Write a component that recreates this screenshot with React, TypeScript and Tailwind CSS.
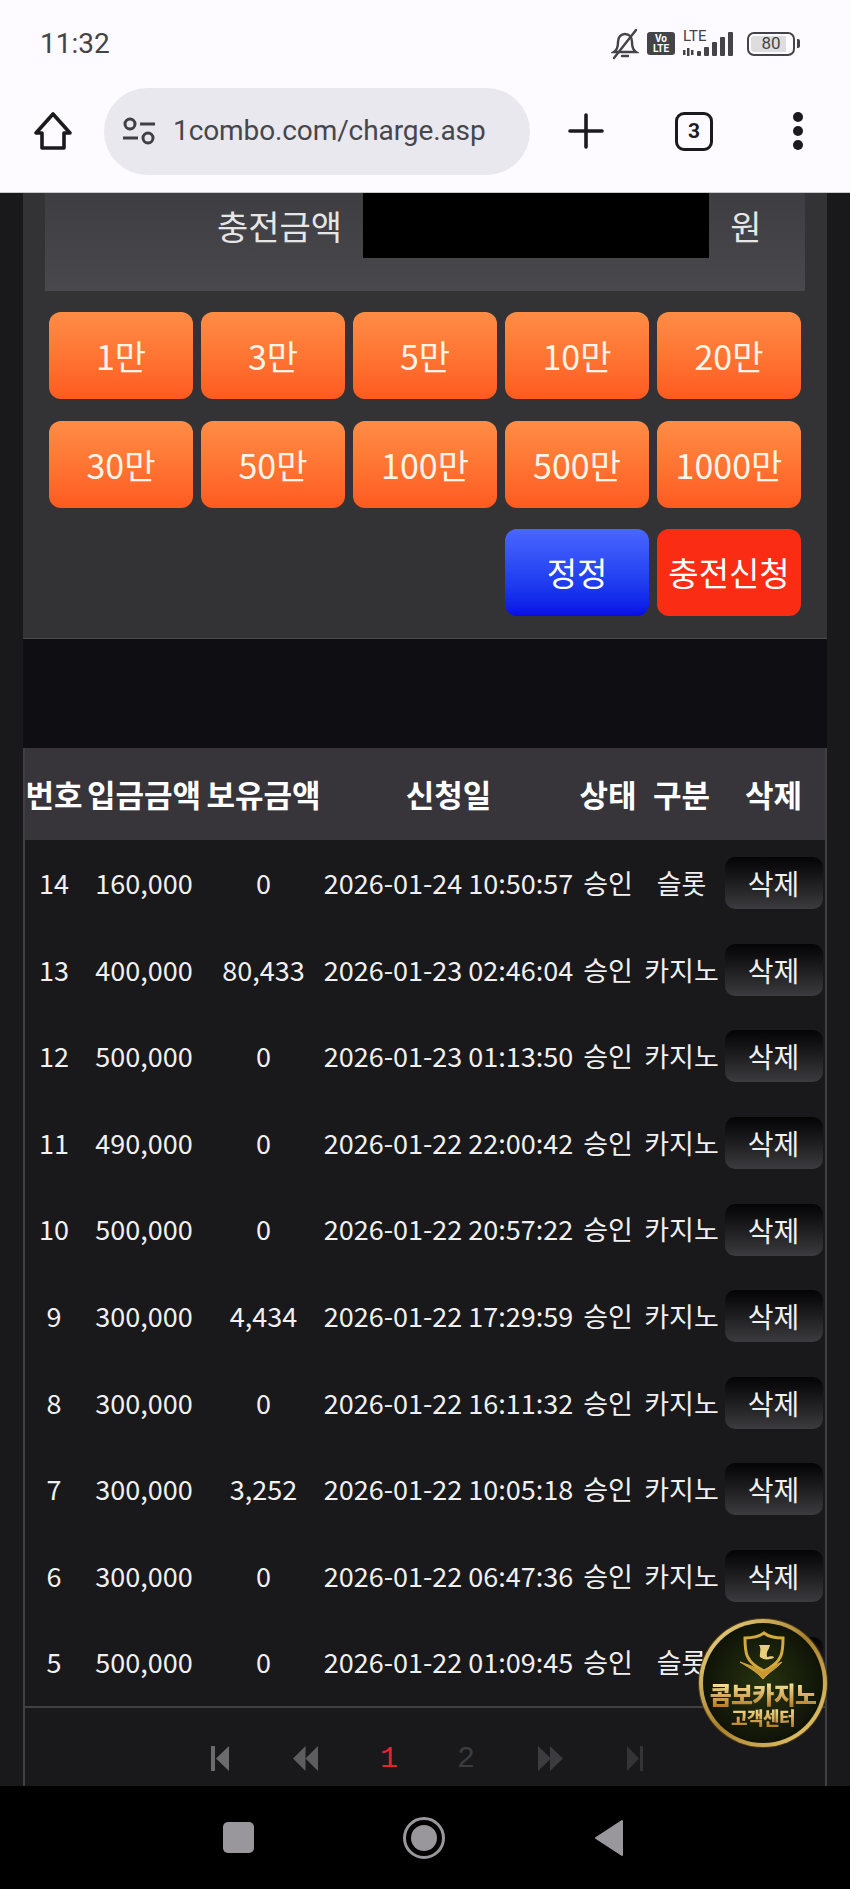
const amounts = ["1만", "3만", "5만", "10만", "20만", "30만", "50만", "100만", "500만", "1000만"];

type Row = { no: number; amount: string; balance: string; date: string; kind: string };

const rows: Row[] = [
  { no: 14, amount: "160,000", balance: "0", date: "2026-01-24 10:50:57", kind: "슬롯" },
  { no: 13, amount: "400,000", balance: "80,433", date: "2026-01-23 02:46:04", kind: "카지노" },
  { no: 12, amount: "500,000", balance: "0", date: "2026-01-23 01:13:50", kind: "카지노" },
  { no: 11, amount: "490,000", balance: "0", date: "2026-01-22 22:00:42", kind: "카지노" },
  { no: 10, amount: "500,000", balance: "0", date: "2026-01-22 20:57:22", kind: "카지노" },
  { no: 9, amount: "300,000", balance: "4,434", date: "2026-01-22 17:29:59", kind: "카지노" },
  { no: 8, amount: "300,000", balance: "0", date: "2026-01-22 16:11:32", kind: "카지노" },
  { no: 7, amount: "300,000", balance: "3,252", date: "2026-01-22 10:05:18", kind: "카지노" },
  { no: 6, amount: "300,000", balance: "0", date: "2026-01-22 06:47:36", kind: "카지노" },
  { no: 5, amount: "500,000", balance: "0", date: "2026-01-22 01:09:45", kind: "슬롯" },
];

const krFont = "font-['Noto_Sans_CJK_KR','Noto_Sans',sans-serif]";

function StatusBar() {
  return (
    <div className="flex h-[70px] items-center justify-between pl-[40px] pr-[50px] pt-[17px] text-[#444347]">
      <span className="font-['Roboto',sans-serif] text-[28px] leading-none">11:32</span>
      <div className="flex items-center">
        <svg width="28" height="32" viewBox="0 0 28 32" fill="none" stroke="#444347" strokeWidth="2.4" strokeLinecap="round">
          <path d="M3 24c3-2 4-5 4-10 0-5 3-8 7-8s7 3 7 8c0 5 1 8 4 10z" />
          <path d="M11 28h6" />
          <path d="M25 2 3 30" />
        </svg>
        <div className="ml-[8px] flex h-[23px] w-[28px] flex-col items-center justify-center rounded-[3px] bg-[#444347] font-['Roboto',sans-serif] text-[10px] font-bold leading-[10px] text-white">
          <span>Vo</span>
          <span>LTE</span>
        </div>
        <div className="relative ml-[8px] h-[26px] w-[52px]">
          <span className="absolute left-0 top-[-2px] font-['Roboto',sans-serif] text-[15px] leading-[14px]">LTE</span>
          <svg width="52" height="26" viewBox="0 0 52 26" fill="#444347">
            <rect x="0" y="19" width="2.5" height="5" />
            <rect x="4" y="17" width="2.5" height="8" />
            <rect x="8" y="19" width="2.5" height="5" />
            <rect x="14" y="20" width="4" height="5" rx="1" />
            <rect x="21" y="16" width="5" height="9" rx="1" />
            <rect x="29" y="11" width="5" height="14" rx="1" />
            <rect x="37" y="6" width="5" height="19" rx="1" />
            <rect x="45" y="1" width="5" height="24" rx="1" />
          </svg>
        </div>
        <div className="ml-[12px] flex h-[24px] w-[48px] items-center justify-center rounded-[7px] border-2 border-[#444347] bg-[linear-gradient(90deg,#dddcdf_84%,transparent_84%)] bg-clip-content p-[2px] font-['Roboto',sans-serif] text-[17px] leading-none">
          80
        </div>
        <div className="ml-[2px] h-[9px] w-[3px] rounded-r-[2px] bg-[#444347]" />
      </div>
    </div>
  );
}

function Toolbar() {
  return (
    <div className="flex h-[123px] items-center border-b border-[#c9c8cc] pl-[33px]">
      <svg width="40" height="40" viewBox="0 0 40 40" fill="none" stroke="#1b1b1f" strokeWidth="3.6" strokeLinejoin="round">
        <path d="M20 3 3 22h6v15h22V22h6z" />
      </svg>
      <div className="ml-[31px] flex h-[87px] w-[426px] items-center rounded-full bg-[#e9e8ee] pl-[19px]">
        <svg width="32" height="28" viewBox="0 0 32 28" fill="none" stroke="#3f3f45" strokeWidth="3">
          <circle cx="7" cy="7" r="5" />
          <path d="M17 7h15" />
          <path d="M0 21h15" />
          <circle cx="25" cy="21" r="5" />
        </svg>
        <span className="ml-[18px] font-['Roboto',sans-serif] text-[28px] leading-none tracking-[-0.1px] text-[#46464c]">
          1combo.com/charge.asp
        </span>
      </div>
      <svg width="36" height="36" viewBox="0 0 36 36" className="ml-[38px]" stroke="#1b1b1f" strokeWidth="3.6" strokeLinecap="round">
        <path d="M18 2v32" />
        <path d="M2 18h32" />
      </svg>
      <div className="ml-[71px] flex h-[39px] w-[38px] items-center justify-center rounded-[9px] border-[3.5px] border-[#1b1b1f] font-['Roboto',sans-serif] text-[21px] font-bold leading-none text-[#1b1b1f]">
        3
      </div>
      <div className="ml-[80px] flex flex-col gap-[4px]">
        <span className="size-[10px] rounded-full bg-[#1b1b1f]" />
        <span className="size-[10px] rounded-full bg-[#1b1b1f]" />
        <span className="size-[10px] rounded-full bg-[#1b1b1f]" />
      </div>
    </div>
  );
}

function ChargePanel() {
  return (
    <div className="border-b border-[#4a4a4d] bg-[#333335] pb-[22px]">
      <div className="mx-[22px] flex h-[98px] items-start bg-gradient-to-b from-[#3e3d41] to-[#49484c] text-[#e6e6e6]">
        <span className="ml-[172px] mt-[9px] text-[34px] leading-[48px]">충전금액</span>
        <div className="ml-[21px] h-[65px] w-[346px] bg-black" />
        <span className="ml-[21px] mt-[9px] text-[34px] leading-[48px]">원</span>
      </div>
      <div className="mt-[21px] grid grid-cols-5 gap-x-[8px] gap-y-[21.5px] pl-[26px] pr-[26px]">
        {amounts.map((a) => (
          <button
            key={a}
            className="flex h-[87px] items-center justify-center rounded-[12px] bg-gradient-to-b from-[#ff8c45] to-[#ff5a1f] text-[34px] text-[#fff4e8]"
          >
            {a}
          </button>
        ))}
        <button className="col-start-4 flex h-[87px] items-center justify-center rounded-[12px] bg-gradient-to-b from-[#4a66ff] to-[#0a0ae6] text-[33px] text-white">
          정정
        </button>
        <button className="flex h-[87px] items-center justify-center rounded-[12px] bg-[#fb2c14] text-[33px] text-white">
          충전신청
        </button>
      </div>
    </div>
  );
}

function HistoryTable() {
  return (
    <div className="border-x-2 border-[#403f43]">
      <table className="w-full table-fixed border-collapse">
        <colgroup>
          <col className="w-[58px]" />
          <col className="w-[122px]" />
          <col className="w-[117px]" />
          <col className="w-[253px]" />
          <col className="w-[66px]" />
          <col className="w-[81px]" />
          <col />
        </colgroup>
        <thead>
          <tr className="h-[92px] bg-[#37353a] text-[31px] font-bold text-white">
            <th className="whitespace-nowrap font-bold">번호</th>
            <th className="whitespace-nowrap font-bold">입금금액</th>
            <th className="whitespace-nowrap font-bold">보유금액</th>
            <th className="whitespace-nowrap font-bold">신청일</th>
            <th className="whitespace-nowrap font-bold">상태</th>
            <th className="whitespace-nowrap font-bold">구분</th>
            <th className="whitespace-nowrap font-bold">삭제</th>
          </tr>
        </thead>
        <tbody className="text-center text-[27px] text-[#f0f0f0]">
          {rows.map((r) => (
            <tr key={r.no} className="h-[86.6px]">
              <td>{r.no}</td>
              <td>{r.amount}</td>
              <td>{r.balance}</td>
              <td className="whitespace-nowrap">{r.date}</td>
              <td>승인</td>
              <td className="whitespace-nowrap">{r.kind}</td>
              <td>
                <button className="h-[52px] w-[98px] rounded-[10px] bg-gradient-to-b from-[#050506] to-[#3c3c40] text-[28px] leading-none text-[#f0f0f0]">
                  삭제
                </button>
              </td>
            </tr>
          ))}
        </tbody>
      </table>
      <Pagination />
    </div>
  );
}

function Pagination() {
  return (
    <div className="flex h-[80px] items-center border-t-2 border-[#403f43] pl-[186px] pt-[24px]">
      <svg width="18" height="25" viewBox="0 0 18 25" fill="#6b6b6e">
        <rect x="0" y="0" width="4" height="25" />
        <path d="M18 0v25L5 12.5z" />
      </svg>
      <svg width="25" height="25" viewBox="0 0 25 25" fill="#5d5d60" className="ml-[64px]">
        <path d="M12.5 0v25L0 12.5z" />
        <path d="M25 0v25L12.5 12.5z" />
      </svg>
      <span className="ml-[62px] w-[18px] text-center font-['Liberation_Mono',monospace] text-[30px] leading-none text-[#e3262c]">1</span>
      <span className="ml-[59px] w-[18px] text-center font-['Liberation_Mono',monospace] text-[30px] leading-none text-[#3c3c40]">2</span>
      <svg width="25" height="25" viewBox="0 0 25 25" fill="#3c3c40" className="ml-[63px]">
        <path d="M0 0v25l13-12.5z" />
        <path d="M12 0v25l13-12.5z" />
      </svg>
      <svg width="17" height="25" viewBox="0 0 17 25" fill="#343437" className="ml-[64px]">
        <path d="M0 0v25l12-12.5z" />
        <rect x="13" y="0" width="3" height="25" />
      </svg>
    </div>
  );
}

function SupportBadge() {
  return (
    <div className="absolute left-[699px] top-[1619px] size-[128px] rounded-full bg-gradient-to-br from-[#f6e08c] via-[#a9812c] to-[#f0d577] p-[4px] shadow-[0_0_0_1px_#4a3a15]">
      <div className="flex size-full flex-col items-center overflow-hidden rounded-full bg-[radial-gradient(circle_at_50%_50%,#26330f,#0d1007_78%)]">
        <svg width="48" height="50" viewBox="0 0 48 50" fill="none" className="mt-[8px] shrink-0" stroke="#d4a93f" strokeWidth="3">
          <path d="M25 2c5 4 11 5 19 5 0 14 0 24-19 33C6 31 6 21 6 7c8 0 14-1 19-5z" />
          <path d="M1 31c8 5 16 9 23 17 7-8 13-10 19-17-6 3-13 6-19 9-8-4-15-6-23-9z" fill="#c9982f" strokeWidth="1" />
          <path d="M20 14h11c-1 5-4 6-3 12 3 0 6-2 7 1-5 2-11 2-14-1-1-4 2-7-1-12z" fill="#e8cf7c" stroke="none" />
        </svg>
        <span className="mt-[-1px] whitespace-nowrap bg-gradient-to-b from-[#fff1a8] to-[#b47d22] bg-clip-text text-[24px] font-black leading-[27px] tracking-[-0.8px] text-transparent">
          콤보카지노
        </span>
        <span className="whitespace-nowrap bg-gradient-to-b from-[#fbe697] to-[#b47d22] bg-clip-text text-[18px] font-black leading-[20px] tracking-[-0.6px] text-transparent">
          고객센터
        </span>
      </div>
    </div>
  );
}

function NavBar() {
  return (
    <div className="flex h-[103px] items-center bg-black pl-[223px]">
      <div className="h-[31px] w-[31px] rounded-[5px] bg-[#9a979c]" />
      <div className="ml-[149px] flex size-[42px] items-center justify-center rounded-full border-[3px] border-[#9a979c]">
        <div className="size-[26px] rounded-full bg-[#9a979c]" />
      </div>
      <svg width="28" height="36" viewBox="0 0 28 36" fill="#9a979c" stroke="#9a979c" strokeWidth="2" strokeLinejoin="round" className="ml-[150px]">
        <path d="M27 1v34L1 18z" />
      </svg>
    </div>
  );
}

export default function App() {
  return (
    <div className={`relative flex h-[1889px] w-[850px] flex-col overflow-hidden bg-[#fdfbff] ${krFont}`}>
      <StatusBar />
      <Toolbar />
      <main className="min-h-0 flex-1 overflow-hidden bg-[#19181b] px-[23px]">
        <ChargePanel />
        <div className="h-[109px] bg-[#0f0e12]" />
        <HistoryTable />
      </main>
      <NavBar />
      <SupportBadge />
    </div>
  );
}
